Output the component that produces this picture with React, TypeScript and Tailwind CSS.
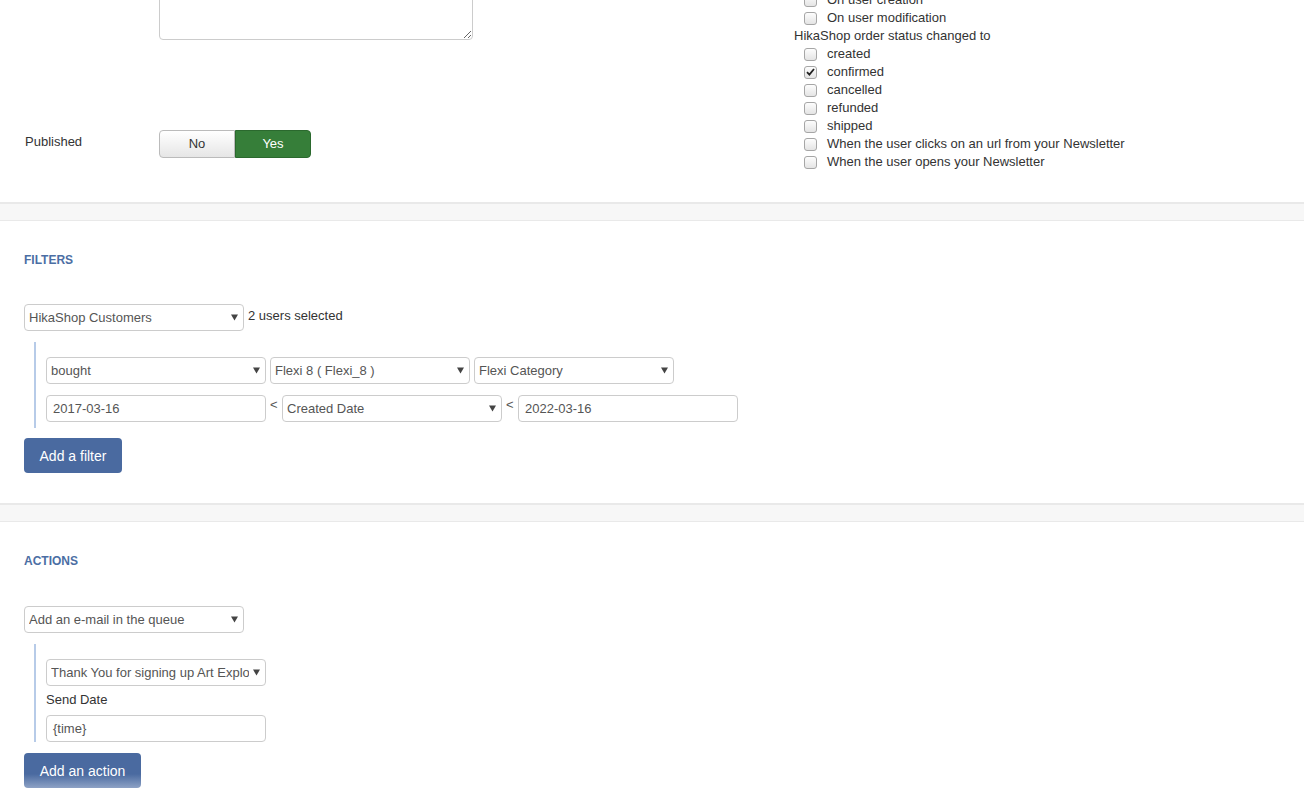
import React from 'react';

type Opt = { label: string; checked?: boolean };

const triggers: Opt[] = [
  { label: 'created' },
  { label: 'confirmed', checked: true },
  { label: 'cancelled' },
  { label: 'refunded' },
  { label: 'shipped' },
  { label: 'When the user clicks on an url from your Newsletter' },
  { label: 'When the user opens your Newsletter' },
];

function Checkbox({ checked }: { checked?: boolean }) {
  return (
    <span className="w-[13px] h-[13px] shrink-0 rounded-[3px] border border-[#a6a6a6] bg-linear-to-b from-[#fdfdfd] to-[#e4e4e4] flex items-center justify-center">
      {checked && (
        <svg width="9" height="8" viewBox="0 0 9 8">
          <path d="M1 4.2 L3.4 6.6 L8 1" fill="none" stroke="#222" strokeWidth="1.8" />
        </svg>
      )}
    </span>
  );
}

function CheckRow({ label, checked }: Opt) {
  return (
    <div className="ml-[10px] flex items-center gap-[10px] h-[18px]">
      <Checkbox checked={checked} />
      <span>{label}</span>
    </div>
  );
}

function Select({ value, w }: { value: string; w: string }) {
  return (
    <div className={`${w} h-[27px] shrink-0 flex items-center rounded-[4px] border border-[#ccc] bg-white pl-[4px] pr-[5px] text-[#555]`}>
      <span className="flex-1 overflow-hidden whitespace-nowrap">{value}</span>
      <svg width="7" height="7" viewBox="0 0 7 7" className="ml-[4px] shrink-0">
        <path d="M0 0.5 H7 L3.5 6.5 Z" fill="#444" />
      </svg>
    </div>
  );
}

function Input({ value }: { value: string }) {
  return (
    <div className="w-[220px] h-[27px] shrink-0 flex items-center rounded-[4px] border border-[#ccc] bg-white px-[6px] text-[#555]">
      {value}
    </div>
  );
}

function Lt() {
  return <span className="w-[8px] mx-[4px] pt-[1px] text-[#555]">&lt;</span>;
}

function Band() {
  return <div className="h-[19px] border-t-2 border-b border-[#e9e9e9] bg-[#f7f7f7]" />;
}

function Heading({ children }: { children: React.ReactNode }) {
  return <h3 className="h-[18px] pt-[1px] text-[12px] font-bold uppercase text-[#4b6ea4]">{children}</h3>;
}

export default function App() {
  return (
    <div className="min-h-screen overflow-hidden bg-white text-[13px] leading-[18px] text-[#333] font-['Liberation_Sans',Arial,sans-serif]">
      <div className="-mt-[28px]">
        {/* general settings */}
        <section className="flex items-start">
          <div className="w-[794px] shrink-0 pb-[44px]">
            <div className="ml-[159px]">
              <textarea
                className="block w-[314px] h-[68px] rounded-[4px] border border-[#ccc] bg-white outline-none"
                defaultValue=""
              />
            </div>
            <div className="mt-[90px] flex items-start">
              <label className="w-[159px] pl-[25px] pt-[3px]">Published</label>
              <div className="flex h-[28px]">
                <button className="w-[76px] h-full rounded-l-[4px] border border-[#bbb] bg-linear-to-b from-white to-[#e6e6e6] text-[#333]">
                  No
                </button>
                <button className="w-[76px] h-full rounded-r-[4px] border border-[#2b692e] bg-[#367e39] text-white">
                  Yes
                </button>
              </div>
            </div>
          </div>
          <div className="pt-[19px]">
            <CheckRow label="On user creation" />
            <CheckRow label="On user modification" />
            <div className="h-[18px]">HikaShop order status changed to</div>
            {triggers.map((t) => (
              <CheckRow key={t.label} label={t.label} checked={t.checked} />
            ))}
          </div>
        </section>

        <Band />

        {/* filters */}
        <section className="px-[24px] pt-[29px] pb-[30px]">
          <Heading>Filters</Heading>
          <div className="mt-[36px] flex items-start">
            <Select w="w-[220px]" value="HikaShop Customers" />
            <span className="ml-[4px] pt-[3px]">2 users selected</span>
          </div>
          <div className="mt-[11px] ml-[10px] border-l-2 border-[#b7cbe8] pl-[10px] pt-[15px] pb-[6px] flex flex-col gap-[11px]">
            <div className="flex gap-[4px]">
              <Select w="w-[220px]" value="bought" />
              <Select w="w-[200px]" value="Flexi 8 ( Flexi_8 )" />
              <Select w="w-[200px]" value="Flexi Category" />
            </div>
            <div className="flex items-start">
              <Input value="2017-03-16" />
              <Lt />
              <Select w="w-[220px]" value="Created Date" />
              <Lt />
              <Input value="2022-03-16" />
            </div>
          </div>
          <button className="mt-[10px] w-[98px] h-[35px] rounded-[4px] bg-[#4a6aa0] text-[14px] text-white">
            Add a filter
          </button>
        </section>

        <Band />

        {/* actions */}
        <section className="px-[24px] pt-[29px] pb-[30px]">
          <Heading>Actions</Heading>
          <div className="mt-[37px]">
            <Select w="w-[220px]" value="Add an e-mail in the queue" />
          </div>
          <div className="mt-[11px] ml-[10px] border-l-2 border-[#b7cbe8] pl-[10px] pt-[15px]">
            <Select w="w-[220px]" value="Thank You for signing up Art Explorers" />
            <div className="mt-[5px] h-[18px]">Send Date</div>
            <div className="mt-[6px]">
              <Input value="{time}" />
            </div>
          </div>
          <button className="mt-[11px] w-[117px] h-[35px] rounded-[4px] bg-linear-to-b from-[#4a6aa0] from-60% to-[#8ea2c5] text-[14px] text-white">
            Add an action
          </button>
        </section>
      </div>
    </div>
  );
}
